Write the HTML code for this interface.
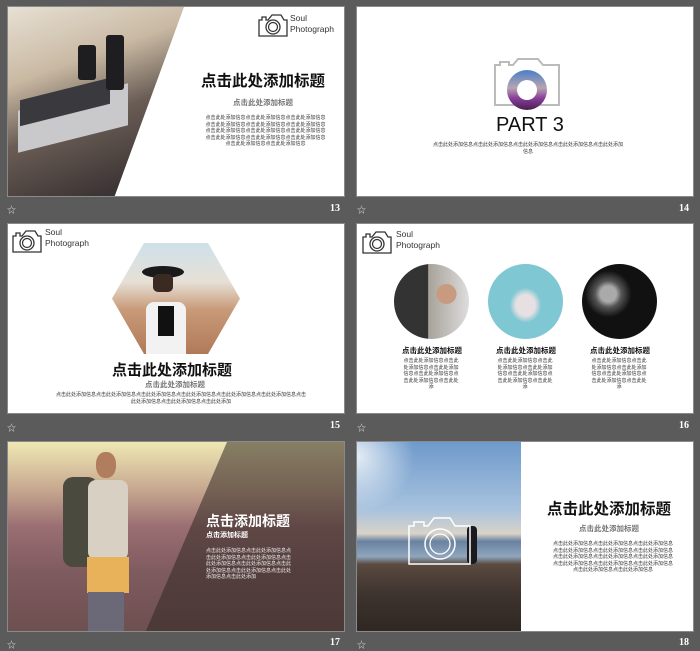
<!DOCTYPE html>
<html><head><meta charset="utf-8"><style>
*{margin:0;padding:0;box-sizing:border-box}
body{width:700px;height:649px;background:#5b5b5b;position:relative;overflow:hidden;font-family:"Liberation Sans","Noto Sans CJK SC",sans-serif}
.s{position:absolute;background:#fff;overflow:hidden;border:1px solid #8a8a8a}
.a{position:absolute}
.num{position:absolute;color:#fff;font:bold 10px "Liberation Serif",serif}
.star{position:absolute;color:#ddd;font-size:9px}
.t{position:absolute;font-weight:bold;color:#111;white-space:nowrap}
.sub{position:absolute;color:#777;font-weight:bold;white-space:nowrap}
.b{position:absolute;font-size:5px;line-height:6.5px;color:#333;text-align:center;word-break:break-all}
.logo{position:absolute;font-size:8.5px;line-height:11px;color:#333}
</style></head><body>

<!-- slide 13 -->
<div class="s" style="left:7px;top:6px;width:338px;height:191px">
  <div class="a" style="left:0;top:0;width:338px;height:191px;clip-path:polygon(0 0,176px 0,106px 191px,0 191px);background:linear-gradient(160deg,#e7e0d4 0%,#c9b9a3 25%,#6a5d55 45%,#3d3535 70%,#2e2a2c 100%)"></div>
  <div class="a" style="left:10px;top:90px;width:110px;height:42px;background:#c9c9cb;transform:skewY(-14deg)"></div>
  <div class="a" style="left:12px;top:82px;width:90px;height:26px;background:#3a3a3e;transform:skewY(-14deg)"></div>
  <div class="a" style="left:70px;top:38px;width:18px;height:35px;background:#1e1e20;border-radius:3px"></div>
  <div class="a" style="left:98px;top:28px;width:18px;height:55px;background:#1e1e20;border-radius:3px"></div>
  <svg class="a" style="left:249px;top:5px" width="32" height="26" viewBox="0 0 32 26"><path d="M2 8h3V5h4v3h2l4-5h9l3 5h3v16H2z" fill="none" stroke="#333" stroke-width="1.3"/><circle cx="16" cy="15" r="7" fill="none" stroke="#333" stroke-width="1.3"/><circle cx="16" cy="15" r="4.5" fill="none" stroke="#333" stroke-width="1.2"/></svg>
  <div class="logo" style="left:282px;top:6px">Soul<br>Photograph</div>
  <div class="t" style="left:193px;top:62px;font-size:15.5px">点击此处添加标题</div>
  <div class="sub" style="left:225px;top:90px;font-size:7.5px">点击此处添加标题</div>
  <div class="b" style="left:197px;top:108px;width:121px">点击此处添加信息点击此处添加信息点击此处添加信息点击此处添加信息点击此处添加信息点击此处添加信息点击此处添加信息点击此处添加信息点击此处添加信息点击此处添加信息点击此处添加信息点击此处添加信息点击此处添加信息点击此处添加信息</div>
</div>
<span class="star" style="left:7px;top:203px">☆</span><span class="num" style="left:330px;top:203px">13</span>

<!-- slide 14 -->
<div class="s" style="left:356px;top:6px;width:338px;height:191px">
  <svg class="a" style="left:136px;top:48px" width="68" height="52" viewBox="0 0 68 52"><path d="M2 10h5V7h9v3h4l5-6h20l5 6h16v40H2z" fill="none" stroke="#bbb" stroke-width="2"/></svg>
  <div class="a" style="left:150px;top:63px;width:40px;height:40px;border-radius:50%;background:linear-gradient(#4a7fc8,#b7a5b0 45%,#8a3f9a 70%,#4a1f50);"></div>
  <div class="a" style="left:160px;top:73px;width:20px;height:20px;border-radius:50%;background:#fff"></div>
  <div class="a" style="left:139px;top:107px;font-size:20px;color:#111">PART 3</div>
  <div class="b" style="left:75px;top:135px;width:192px">点击此处添加信息点击此处添加信息点击此处添加信息点击此处添加信息点击此处添加信息</div>
</div>
<span class="star" style="left:357px;top:203px">☆</span><span class="num" style="left:679px;top:203px">14</span>

<!-- slide 15 -->
<div class="s" style="left:7px;top:223px;width:338px;height:191px">
  <svg class="a" style="left:3px;top:4px" width="32" height="26" viewBox="0 0 32 26"><path d="M2 8h3V5h4v3h2l4-5h9l3 5h3v16H2z" fill="none" stroke="#333" stroke-width="1.3"/><circle cx="16" cy="15" r="7" fill="none" stroke="#333" stroke-width="1.3"/><circle cx="16" cy="15" r="4.5" fill="none" stroke="#333" stroke-width="1.2"/></svg>
  <div class="logo" style="left:37px;top:3px">Soul<br>Photograph</div>
  <div class="a" style="left:104px;top:19px;width:128px;height:111px;clip-path:polygon(25% 0,75% 0,100% 50%,75% 100%,25% 100%,0 50%);background:linear-gradient(180deg,#cfe0ea 0%,#e6e0d6 35%,#c99a78 60%,#b07a5a 100%)"></div>
  <div class="a" style="left:138px;top:78px;width:40px;height:52px;background:#f2f2f2;border-radius:8px 8px 0 0"></div>
  <div class="a" style="left:150px;top:82px;width:16px;height:30px;background:#111"></div>
  <div class="a" style="left:134px;top:42px;width:42px;height:12px;background:#1a1a1a;border-radius:50%"></div>
  <div class="a" style="left:145px;top:50px;width:20px;height:18px;background:#3a2a22;border-radius:5px"></div>
  <div class="t" style="left:104px;top:135px;font-size:15px">点击此处添加标题</div>
  <div class="sub" style="left:137px;top:155px;font-size:7.5px">点击此处添加标题</div>
  <div class="b" style="left:48px;top:168px;width:250px">点击此处添加信息点击此处添加信息点击此处添加信息点击此处添加信息点击此处添加信息点击此处添加信息点击此处添加信息点击此处添加信息点击此处添加</div>
</div>
<span class="star" style="left:7px;top:421px">☆</span><span class="num" style="left:330px;top:420px">15</span>

<!-- slide 16 -->
<div class="s" style="left:356px;top:223px;width:338px;height:191px">
  <svg class="a" style="left:4px;top:5px" width="32" height="26" viewBox="0 0 32 26"><path d="M2 8h3V5h4v3h2l4-5h9l3 5h3v16H2z" fill="none" stroke="#333" stroke-width="1.3"/><circle cx="16" cy="15" r="7" fill="none" stroke="#333" stroke-width="1.3"/><circle cx="16" cy="15" r="4.5" fill="none" stroke="#333" stroke-width="1.2"/></svg>
  <div class="logo" style="left:39px;top:5px">Soul<br>Photograph</div>
  <div class="a" style="left:37px;top:40px;width:75px;height:75px;border-radius:50%;background:radial-gradient(circle at 70% 40%,#c89a80 0 14%,transparent 15%),linear-gradient(90deg,#333 0 45%,#a8a29a 46%,#ddd 100%)"></div>
  <div class="a" style="left:131px;top:40px;width:75px;height:75px;border-radius:50%;background:radial-gradient(ellipse at 50% 55%,#e7e0e2 0 18%,transparent 30%),#7fc7d3"></div>
  <div class="a" style="left:225px;top:40px;width:75px;height:75px;border-radius:50%;background:radial-gradient(circle at 35% 40%,#aaa 0 12%,#555 20%,#111 35%),#0b0b0b"></div>
  <div class="t" style="left:45px;top:121px;font-size:7.5px">点击此处添加标题</div>
  <div class="t" style="left:139px;top:121px;font-size:7.5px">点击此处添加标题</div>
  <div class="t" style="left:233px;top:121px;font-size:7.5px">点击此处添加标题</div>
  <div class="b" style="left:45px;top:134px;width:58px">点击此处添加信息点击此处添加信息点击此处添加信息点击此处添加信息点击此处添加信息点击此处添</div>
  <div class="b" style="left:139px;top:134px;width:58px">点击此处添加信息点击此处添加信息点击此处添加信息点击此处添加信息点击此处添加信息点击此处添</div>
  <div class="b" style="left:233px;top:134px;width:58px">点击此处添加信息点击此处添加信息点击此处添加信息点击此处添加信息点击此处添加信息点击此处添</div>
</div>
<span class="star" style="left:357px;top:421px">☆</span><span class="num" style="left:679px;top:420px">16</span>

<!-- slide 17 -->
<div class="s" style="left:7px;top:441px;width:338px;height:191px;background:linear-gradient(180deg,#efe8b4 0%,#c7a890 25%,#9a6e72 45%,#7d5a5e 70%,#6e5050 100%)">
  <div class="a" style="left:0;top:0;width:338px;height:191px;background:rgba(50,40,35,.55);clip-path:polygon(219px 0,338px 0,338px 191px,137px 191px)"></div>
  <div class="a" style="left:55px;top:35px;width:35px;height:90px;background:#4b4a3f;border-radius:10px"></div>
  <div class="a" style="left:80px;top:38px;width:40px;height:80px;background:#d9d0c4;border-radius:8px"></div>
  <div class="a" style="left:79px;top:115px;width:42px;height:36px;background:#e7b25a"></div>
  <div class="a" style="left:80px;top:150px;width:36px;height:41px;background:#6b6878"></div>
  <div class="a" style="left:88px;top:10px;width:20px;height:26px;background:#b07d5f;border-radius:45%"></div>
  <div class="t" style="left:198px;top:69px;font-size:14px;color:#fff">点击添加标题</div>
  <div class="t" style="left:198px;top:88px;font-size:7px;color:#fff">点击添加标题</div>
  <div class="b" style="left:198px;top:106px;width:88px;color:#eee;text-align:left">点击此处添加信息点击此处添加信息点击此处添加信息点击此处添加信息点击此处添加信息点击此处添加信息点击此处添加信息点击此处添加信息点击此处添加信息点击此处添加</div>
</div>
<span class="star" style="left:7px;top:638px">☆</span><span class="num" style="left:330px;top:637px">17</span>

<!-- slide 18 -->
<div class="s" style="left:356px;top:441px;width:338px;height:191px">
  <div class="a" style="left:0;top:0;width:164px;height:191px;background:linear-gradient(180deg,#6f9acb 0%,#a7c2de 35%,#d9d3c9 48%,#6a82a0 52%,#8fa6bd 60%,#5a4a40 64%,#3e332e 80%,#2e2622 100%)"></div>
  <div class="a" style="left:0;top:0;width:60px;height:70px;background:radial-gradient(circle at 0 20%,rgba(255,255,255,.8),transparent 70%)"></div>
  <div class="a" style="left:110px;top:84px;width:10px;height:38px;background:#1a1a1e;border-radius:4px"></div>
  <svg class="a" style="left:50px;top:72px" width="66" height="52" viewBox="0 0 66 52"><path d="M2 12h5V8h10v4h4l6-8h16l5 8h15v38H2z" fill="none" stroke="#fff" stroke-width="1.5"/><circle cx="33" cy="30" r="15" fill="none" stroke="#fff" stroke-width="1.5"/><circle cx="33" cy="30" r="10" fill="none" stroke="#fff" stroke-width="1.3"/></svg>
  <div class="t" style="left:190px;top:55px;font-size:15.5px">点击此处添加标题</div>
  <div class="sub" style="left:222px;top:81px;font-size:7.5px">点击此处添加标题</div>
  <div class="b" style="left:195px;top:99px;width:122px">点击此处添加信息点击此处添加信息点击此处添加信息点击此处添加信息点击此处添加信息点击此处添加信息点击此处添加信息点击此处添加信息点击此处添加信息点击此处添加信息点击此处添加信息点击此处添加信息点击此处添加信息点击此处添加信息</div>
</div>
<span class="star" style="left:357px;top:638px">☆</span><span class="num" style="left:679px;top:637px">18</span>

</body></html>
